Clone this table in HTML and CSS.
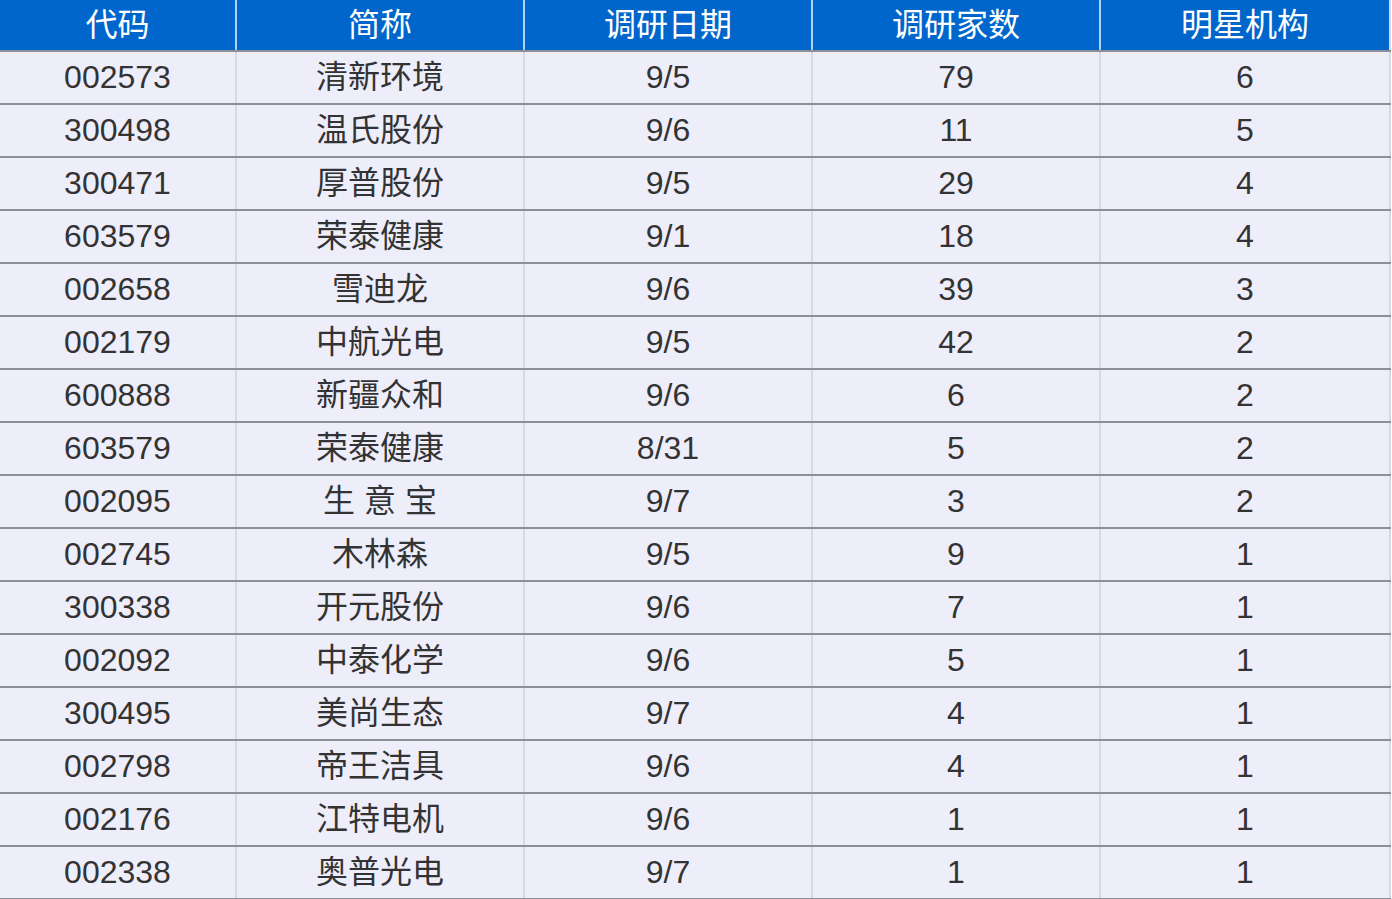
FILE: index.html
```html
<!DOCTYPE html>
<html lang="zh">
<head>
<meta charset="utf-8">
<title>调研</title>
<link rel="stylesheet" href="styles.css">
</head>
<body>
<table class="tbl">
<colgroup>
<col class="c1"><col class="c2"><col class="c3"><col class="c4"><col class="c5">
</colgroup>
<thead>
<tr><th>代码</th><th>简称</th><th>调研日期</th><th>调研家数</th><th>明星机构</th></tr>
</thead>
<tbody>
<tr><td>002573</td><td>清新环境</td><td>9/5</td><td>79</td><td>6</td></tr>
<tr><td>300498</td><td>温氏股份</td><td>9/6</td><td>11</td><td>5</td></tr>
<tr><td>300471</td><td>厚普股份</td><td>9/5</td><td>29</td><td>4</td></tr>
<tr><td>603579</td><td>荣泰健康</td><td>9/1</td><td>18</td><td>4</td></tr>
<tr><td>002658</td><td>雪迪龙</td><td>9/6</td><td>39</td><td>3</td></tr>
<tr><td>002179</td><td>中航光电</td><td>9/5</td><td>42</td><td>2</td></tr>
<tr><td>600888</td><td>新疆众和</td><td>9/6</td><td>6</td><td>2</td></tr>
<tr><td>603579</td><td>荣泰健康</td><td>8/31</td><td>5</td><td>2</td></tr>
<tr><td>002095</td><td>生 意 宝</td><td>9/7</td><td>3</td><td>2</td></tr>
<tr><td>002745</td><td>木林森</td><td>9/5</td><td>9</td><td>1</td></tr>
<tr><td>300338</td><td>开元股份</td><td>9/6</td><td>7</td><td>1</td></tr>
<tr><td>002092</td><td>中泰化学</td><td>9/6</td><td>5</td><td>1</td></tr>
<tr><td>300495</td><td>美尚生态</td><td>9/7</td><td>4</td><td>1</td></tr>
<tr><td>002798</td><td>帝王洁具</td><td>9/6</td><td>4</td><td>1</td></tr>
<tr><td>002176</td><td>江特电机</td><td>9/6</td><td>1</td><td>1</td></tr>
<tr><td>002338</td><td>奥普光电</td><td>9/7</td><td>1</td><td>1</td></tr>
</tbody>
</table>
</body>
</html>
```
FILE: styles.css
```css
html, body {
  margin: 0;
  padding: 0;
  background: #ffffff;
}
.tbl {
  width: 1390px;
  table-layout: fixed;
  border-collapse: collapse;
  font-family: "Liberation Sans", "Noto Sans CJK SC", sans-serif;
  font-size: 32px;
}
.c1 { width: 236px; }
.c2 { width: 288px; }
.c3 { width: 288px; }
.c4 { width: 288px; }
.c5 { width: 290px; }
.tbl th {
  height: 50px;
  padding: 0;
  background: #0066cc;
  color: #ffffff;
  font-weight: normal;
  text-align: center;
  line-height: 50px;
  border-left: 2px solid #a6d4f4;
  border-bottom: 2px solid #8e8e9a;
}
.tbl th:first-child { border-left: none; }
.tbl td {
  height: 51px;
  padding: 0;
  background: #eeeefb;
  color: #333333;
  text-align: center;
  line-height: 51px;
  border-left: 2px solid #d8d8e2;
  border-bottom: 2px solid #8e8e9a;
}
.tbl td:first-child { border-left: none; }
.tbl td:last-child, .tbl th:last-child { border-right: 2px solid #d8d8e2; }
```
